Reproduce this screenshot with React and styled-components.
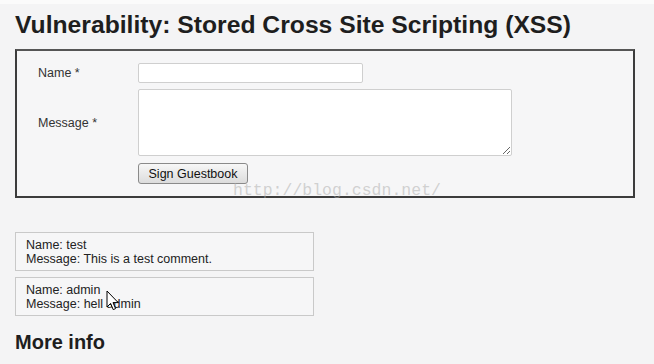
import React from 'react'
import styled, { createGlobalStyle } from 'styled-components'

const GlobalStyle = createGlobalStyle`
	html, body {
		margin: 0;
		padding: 0;
		background: #f4f4f5;
	}
	body {
		font-family: 'Liberation Sans', Arial, sans-serif;
		color: #222;
	}
`

const comments = [
	{ name: 'test', message: 'This is a test comment.' },
	{ name: 'admin', message: 'hell admin' },
]

export default function App() {
	return (
		<>
			<GlobalStyle />
			<Page>
				<Title>Vulnerability: Stored Cross Site Scripting (XSS)</Title>
				<FormBox>
					<Field>
						<Label>Name *</Label>
						<NameInput type='text' />
					</Field>
					<Field>
						<Label>Message *</Label>
						<MessageArea />
					</Field>
					<Field>
						<span />
						<SubmitButton type='button'>Sign Guestbook</SubmitButton>
					</Field>
				</FormBox>

				<CommentList>
					{comments.map((c) => (
						<Comment key={c.name}>
							<div>Name: {c.name}</div>
							<div>Message: {c.message}</div>
						</Comment>
					))}
				</CommentList>

				<SubTitle>More info</SubTitle>

				<Watermark>http://blog.csdn.net/</Watermark>
				<Cursor width='14' height='22' viewBox='0 0 14 22'>
					<path
						d='M1 1 L1 17 L4.6 13.4 L7.2 19.6 L9.6 18.6 L7 12.6 L12.2 12.6 Z'
						fill='#fff'
						stroke='#000'
						strokeWidth='1'
						strokeLinejoin='round'
					/>
				</Cursor>
			</Page>
		</>
	)
}

const Page = styled.div`
	position: relative;
	width: 654px;
	height: 364px;
	overflow: hidden;
	padding: 13px 0 0 15px;
	box-sizing: border-box;
	background: linear-gradient(#fbfbfb 0, #fbfbfb 4px, #f4f4f5 4px);
`
const Title = styled.h1`
	margin: 0;
	font-size: 24.7px;
	line-height: 24px;
	font-weight: bold;
	color: #1e1e1e;
`
const FormBox = styled.div`
	margin-top: 12px;
	width: 620px;
	height: 149px;
	box-sizing: border-box;
	border: 2px solid #3c3c3c;
	border-top-color: #555;
	background: #f6f6f7;
	padding: 12px 0 0 21px;
	display: flex;
	flex-direction: column;
	gap: 6px;
`
const Field = styled.div`
	display: grid;
	grid-template-columns: 100px auto;
	align-items: center;
	justify-items: start;
`
const Label = styled.label`
	font-size: 12.5px;
	color: #333;
`
const NameInput = styled.input`
	width: 225px;
	height: 20px;
	box-sizing: border-box;
	border: 1px solid #cfcfcf;
	border-radius: 2px;
	background: #fff;
	margin: 0;
`
const MessageArea = styled.textarea`
	width: 374px;
	height: 67px;
	box-sizing: border-box;
	border: 1px solid #cfcfcf;
	border-radius: 2px;
	background: #fff;
	margin: 0;
	resize: both;
`
const SubmitButton = styled.button`
	margin-top: 1px;
	width: 110px;
	height: 21px;
	padding: 0;
	border: 1px solid #8a8a8a;
	border-radius: 3px;
	background: linear-gradient(#f7f7f7, #dcdcdc);
	font-family: 'Liberation Sans', Arial, sans-serif;
	font-size: 12.5px;
	color: #111;
`
const CommentList = styled.div`
	margin-top: 34px;
	display: flex;
	flex-direction: column;
	gap: 6px;
`
const Comment = styled.div`
	width: 299px;
	height: 39px;
	box-sizing: border-box;
	border: 1px solid #c9c9c9;
	background: #f6f6f7;
	padding: 5px 10px 0;
	font-size: 12.5px;
	line-height: 14px;
	color: #222;
`
const SubTitle = styled.h2`
	margin: 16px 0 0;
	font-size: 20px;
	line-height: 20px;
	font-weight: bold;
	color: #1e1e1e;
`
const Watermark = styled.div`
	position: absolute;
	left: 233px;
	top: 182px;
	font-family: 'Liberation Mono', 'Courier New', monospace;
	font-size: 16.5px;
	line-height: 18px;
	color: rgba(170, 170, 170, 0.5);
	pointer-events: none;
`
const Cursor = styled.svg`
	position: absolute;
	left: 106px;
	top: 290px;
`
